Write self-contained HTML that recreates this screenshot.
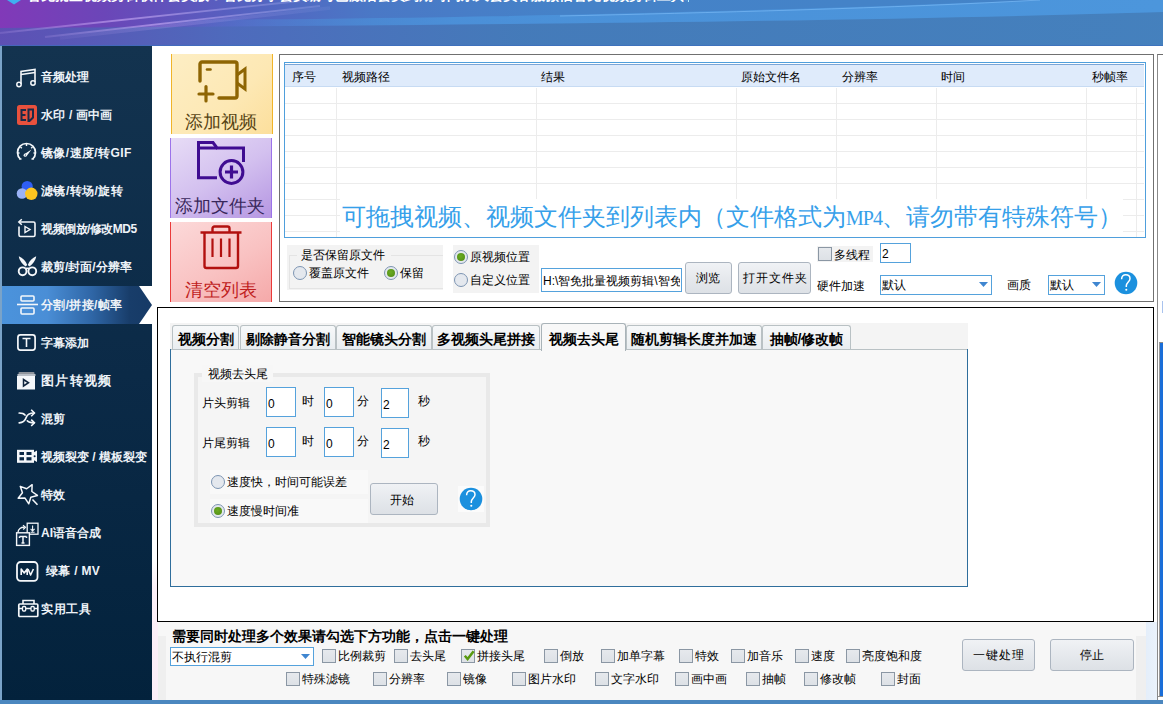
<!DOCTYPE html><html><head><meta charset="utf-8"><style>
*{margin:0;padding:0;box-sizing:border-box}
html,body{width:1163px;height:704px;overflow:hidden;background:#fff;font-family:"Liberation Sans",sans-serif;font-size:12px;color:#000}
div,span,svg{position:absolute}
.t{white-space:nowrap;line-height:12px;font-size:12px}
.si{left:41px;color:#eef3f8;font-size:12px;line-height:12px;white-space:nowrap;font-weight:bold}
.cb{width:14px;height:14px;border:1px solid #8b97a4;background:linear-gradient(180deg,#e6e9ed,#dde1e6)}
.rb{width:14px;height:14px;border-radius:50%;border:1.3px solid #7d95b3;background:#e4e8ee}
.btn{border:1px solid #acb5c0;border-radius:3px;background:linear-gradient(180deg,#f0f2f5 0%,#e6e9ed 50%,#dde1e6 100%)}
.tb{background:#fff;border:1px solid #55a2dc}
.tab{top:325px;height:24px;border:1px solid #b9c1c4;border-bottom:none;border-radius:3px 3px 0 0;background:linear-gradient(180deg,#f7f9fa,#e9edf0);font-weight:bold;font-size:14px;line-height:14px;padding-top:6px;white-space:nowrap;text-align:center}
</style></head><body>
<svg style="left:0;top:0" width="1163" height="46" viewBox="0 0 1163 46"><defs><linearGradient id="hb" x1="0" y1="0" x2="1163" y2="0" gradientUnits="userSpaceOnUse"><stop offset="0" stop-color="#8139b8"/><stop offset="0.09" stop-color="#6b46b8"/><stop offset="0.2" stop-color="#5660c0"/><stop offset="0.32" stop-color="#4a78c6"/><stop offset="0.48" stop-color="#4582c8"/><stop offset="1" stop-color="#4384c8"/></linearGradient><linearGradient id="hl" x1="150" y1="0" x2="1163" y2="0" gradientUnits="userSpaceOnUse"><stop offset="0" stop-color="#4c94dc" stop-opacity="0"/><stop offset="0.3" stop-color="#4c94dc" stop-opacity="0.8"/><stop offset="1" stop-color="#4c96dc" stop-opacity="1"/></linearGradient><linearGradient id="hd" x1="0" y1="0" x2="1163" y2="0" gradientUnits="userSpaceOnUse"><stop offset="0" stop-color="#5a52b4"/><stop offset="0.2" stop-color="#4d6cbc"/><stop offset="0.45" stop-color="#447ab8"/><stop offset="1" stop-color="#4580bc"/></linearGradient><linearGradient id="sg" x1="0" y1="0" x2="1" y2="0"><stop offset="0" stop-color="#d8b8ff" stop-opacity="0.15"/><stop offset="0.4" stop-color="#d8b8ff" stop-opacity="0.55"/><stop offset="1" stop-color="#c8c8ff" stop-opacity="0.2"/></linearGradient></defs><rect x="0" y="0" width="1163" height="46" fill="url(#hb)"/><path d="M0 28 C 300 26, 700 24, 1163 12 V46 H0 Z" fill="url(#hd)" opacity="0.9"/><path d="M150 20 C 400 19, 700 14, 1040 0 H1163 V12 C 900 20, 600 24, 150 27 Z" fill="url(#hl)"/><path d="M560 16 C 700 13, 900 8, 1040 0" stroke="rgba(140,200,255,0.5)" stroke-width="1" fill="none"/><path d="M0 33 L 300 1" stroke="url(#sg)" stroke-width="1.8" fill="none"/><path d="M45 37 L 320 6" stroke="url(#sg)" stroke-width="1.8" fill="none"/><path d="M60 38 L 330 8" stroke="url(#sg)" stroke-width="3.5" fill="none" opacity="0.35"/><rect x="0" y="0" width="250" height="46" fill="rgba(120,40,180,0.0)"/><rect x="0" y="45" width="1163" height="1" fill="rgba(60,110,190,0.7)"/></svg>
<div class="t" style="left:27px;top:-12px;width:662px;overflow:hidden;color:#fff;font-weight:bold;font-size:14px;line-height:14px">智免批量视频剪辑软件会员版：智免分享会员编号已激活会员到期时间永久会员客服微信智免视频剪辑工具箱</div>
<svg style="left:7px;top:0" width="14" height="5"><path d="M0 0 L14 0 L7 4.5 Z" fill="#3fb0f0"/></svg>
<div style="left:0;top:46px;width:152px;height:658px;background:linear-gradient(180deg,#13334f 0%,#0b2a47 50%,#03223c 100%)"></div>
<div style="left:0;top:46px;width:2px;height:658px;background:#7aa3c8"></div>
<div style="left:139px;top:286px;width:13px;height:38px;background:#fff"></div>
<div style="left:2px;top:286px;width:150px;height:38px;clip-path:polygon(0 0,137px 0,150px 19px,137px 38px,0 38px);background:linear-gradient(90deg,#4b93dc 0%,#4a8ed6 30%,#2f66a6 60%,#183d6a 85%,#163a66 100%)"></div>
<div class="si" style="left:41px;top:71px;">音频处理</div>
<div class="si" style="left:41px;top:109px;letter-spacing:0.2px;">水印 / 画中画</div>
<div class="si" style="left:41px;top:147px;letter-spacing:0.4px;">镜像/速度/转GIF</div>
<div class="si" style="left:41px;top:185px;letter-spacing:0.45px;">滤镜/转场/旋转</div>
<div class="si" style="left:41px;top:223px;letter-spacing:-0.5px;">视频倒放/修改MD5</div>
<div class="si" style="left:41px;top:261px;">裁剪/封面/分辨率</div>
<div class="si" style="left:41px;top:299px;letter-spacing:0.35px;">分割/拼接/帧率</div>
<div class="si" style="left:41px;top:337px;">字幕添加</div>
<div class="si" style="left:41px;top:374px;font-size:13px;line-height:13px;letter-spacing:1.3px;">图片转视频</div>
<div class="si" style="left:41px;top:413px;">混剪</div>
<div class="si" style="left:41px;top:451px;">视频裂变 / 模板裂变</div>
<div class="si" style="left:41px;top:489px;">特效</div>
<div class="si" style="left:41px;top:527px;">AI语音合成</div>
<div class="si" style="left:46px;top:565px;letter-spacing:0.3px;">绿幕 / MV</div>
<div class="si" style="left:41px;top:603px;letter-spacing:0.5px;">实用工具</div>
<svg style="left:16px;top:68px" width="21" height="20" viewBox="0 0 21 20"><path d="M5 16 V3.5 L19 1.5 V14" stroke="#f4f7fa" stroke-width="1.6" fill="none"/><path d="M5 6.5 L19 4.5" stroke="#f4f7fa" stroke-width="1.6"/><circle cx="3" cy="16.5" r="2.2" stroke="#f4f7fa" stroke-width="1.5" fill="none"/><circle cx="17" cy="15" r="2.2" stroke="#f4f7fa" stroke-width="1.5" fill="none"/></svg>
<svg style="left:17px;top:105px" width="20" height="20" viewBox="0 0 20 20"><rect x="0" y="0" width="20" height="20" rx="2.5" fill="#e8513d"/><path d="M9 5 H4.5 V15 H9 M4.5 10 H8.5" stroke="#1a2b48" stroke-width="2" fill="none"/><path d="M11.5 4.5 H16 V12.5 L12.5 16 H11.5 Z" stroke="#1a2b48" stroke-width="2" fill="none" stroke-linejoin="miter"/></svg>
<svg style="left:16px;top:142px" width="21" height="20" viewBox="0 0 21 20"><path d="M4.3 17 A9 9 0 1 1 16.7 17" stroke="#f4f7fa" stroke-width="1.7" fill="none"/><path d="M3.2 17 H5.5 M15.5 17 H17.8 M10.5 2 V4 M4.5 5 L5.8 6.3 M16.5 5 L15.2 6.3 M1.8 11 H3.5 M19.2 11 H17.5" stroke="#f4f7fa" stroke-width="1.4"/><path d="M8.2 12.2 L15.5 7.5 L10.5 14.2 Z" fill="#f4f7fa"/><circle cx="9.2" cy="13.2" r="1.6" fill="#f4f7fa"/><circle cx="9.4" cy="13" r="0.6" fill="#13334f"/></svg>
<svg style="left:16px;top:180px" width="22" height="22" viewBox="0 0 22 22"><circle cx="11.2" cy="6.5" r="5.6" fill="#2f5ef5"/><circle cx="6" cy="13.5" r="5.3" fill="#9ab2f6"/><circle cx="15.3" cy="13.8" r="6.2" fill="#fcc520"/></svg>
<svg style="left:17px;top:218px" width="20" height="20" viewBox="0 0 20 20"><path d="M2 4 H16.5 A1.5 1.5 0 0 1 18 5.5 V17 A1.5 1.5 0 0 1 16.5 18.5 H3.5 A1.5 1.5 0 0 1 2 17 V8.5" stroke="#f4f7fa" stroke-width="1.6" fill="none"/><path d="M4.8 1.2 L1.8 4 L4.8 6.8" stroke="#f4f7fa" stroke-width="1.5" fill="none"/><path d="M8 8.5 L13 11.5 L8 14.5 Z" stroke="#f4f7fa" stroke-width="1.4" fill="none"/></svg>
<svg style="left:12px;top:252px" width="30" height="30" viewBox="12 252 30 30"><path d="M18.8 256.3 C 22.5 257.8, 26 261.5, 27.2 265 L 25.6 266.6 C 22.3 264.2, 19.2 260.2, 18.8 256.3 Z" fill="#f4f7fa"/><path d="M36.2 256.3 C 32.5 257.8, 29 261.5, 27.8 265 L 29.4 266.6 C 32.7 264.2, 35.8 260.2, 36.2 256.3 Z" fill="#f4f7fa"/><circle cx="22.6" cy="271.3" r="3.9" stroke="#f4f7fa" stroke-width="1.9" fill="none"/><circle cx="32.3" cy="271.3" r="3.9" stroke="#f4f7fa" stroke-width="1.9" fill="none"/><path d="M25.8 268.3 H29.2" stroke="#f4f7fa" stroke-width="1.5"/></svg>
<svg style="left:17px;top:295px" width="21" height="20" viewBox="0 0 21 20"><rect x="4" y="1" width="13" height="5" rx="1" stroke="#f4f7fa" stroke-width="1.6" fill="none"/><rect x="4" y="13" width="13" height="6" rx="1" stroke="#f4f7fa" stroke-width="1.6" fill="none"/><path d="M0 9.5 H21" stroke="#f4f7fa" stroke-width="1.6"/></svg>
<svg style="left:17px;top:334px" width="19" height="17" viewBox="0 0 19 17"><rect x="0.9" y="0.9" width="17.2" height="15.2" rx="2.5" stroke="#f4f7fa" stroke-width="1.7" fill="none"/><path d="M5.5 4.5 H13.5 M9.5 4.5 V13" stroke="#f4f7fa" stroke-width="1.6"/></svg>
<svg style="left:17px;top:372px" width="19" height="18" viewBox="0 0 19 18"><rect x="1.5" y="0" width="16" height="2.5" rx="1" fill="#8e949c"/><rect x="0.5" y="2" width="18" height="2" fill="#b8bec6"/><rect x="0" y="4" width="18" height="13.5" fill="#f4f7fa"/><path d="M6.5 7.5 L11.5 10.75 L6.5 14 Z" stroke="#10243c" stroke-width="1.5" fill="none"/></svg>
<svg style="left:12px;top:404px" width="30" height="30" viewBox="12 404 30 30"><path d="M19.2 413 C 22 413, 23.8 413.4, 25 415 M19.2 422.8 C 23.8 422.8, 25.3 420.3, 26.3 417.3 C 27.3 414.3, 29.5 413, 34 413 M27.3 420.8 C 28.5 422.3, 30 422.8, 34 422.8" stroke="#f4f7fa" stroke-width="1.7" fill="none" stroke-linecap="round"/><path d="M31.2 409.8 L34.4 413 L31.2 416.2 M31.2 419.6 L34.4 422.8 L31.2 426" stroke="#f4f7fa" stroke-width="1.6" fill="none"/></svg>
<svg style="left:17px;top:448px" width="21" height="17" viewBox="0 0 21 17"><rect x="0" y="1.8" width="17" height="13" fill="#f4f7fa"/><rect x="2.5" y="4" width="4.5" height="3" fill="#0a2846"/><rect x="9.5" y="4" width="5" height="3" fill="#0a2846"/><rect x="2.5" y="9.2" width="4.5" height="3.2" fill="#0a2846"/><rect x="9.5" y="9.2" width="5" height="3.2" fill="#0a2846"/><path d="M16.5 4.5 L20 2.5 V14 L16.5 12 Z" fill="#f4f7fa"/><circle cx="17.6" cy="8.2" r="1" fill="#0a2846"/></svg>
<svg style="left:12px;top:480px" width="30" height="30" viewBox="12 480 30 30"><path d="M37.41 495.47 L30.83 497.30 L28.78 503.80 L25.01 498.11 L18.19 498.17 L22.44 492.83 L20.27 486.36 L26.66 488.75 L32.15 484.69 L31.85 491.51 Z" stroke="#f4f7fa" stroke-width="1.5" fill="none" stroke-linejoin="round"/><path d="M32.5 499.5 L37.5 504.8" stroke="#f4f7fa" stroke-width="1.6"/></svg>
<svg style="left:12px;top:518px" width="30" height="30" viewBox="12 518 30 30"><rect x="27.2" y="523.2" width="10.8" height="11" stroke="#f4f7fa" stroke-width="1.3" fill="none"/><rect x="16.6" y="532.8" width="12.8" height="12.6" stroke="#f4f7fa" stroke-width="1.4" fill="#0a2846"/><path d="M19.5 536.5 H26.5 M19.5 536.5 V538 M26.5 536.5 V538 M23 536.5 V543 M21.5 543 H24.5" stroke="#f4f7fa" stroke-width="1.5" fill="none"/><path d="M32.6 525.5 V530.5 M30.6 528.8 L32.6 531 L34.6 528.8 M30.6 532.3 H34.6" stroke="#f4f7fa" stroke-width="1.1" fill="none"/><path d="M18 532.5 C18 529, 21 527, 24.5 527.3" stroke="#f4f7fa" stroke-width="1.3" fill="none"/><path d="M23 525.3 L25.5 527.3 L23.2 529.5" stroke="#f4f7fa" stroke-width="1.2" fill="none"/></svg>
<svg style="left:16px;top:561px" width="23" height="21" viewBox="0 0 23 21"><rect x="1" y="1" width="20.5" height="18.8" rx="3.5" stroke="#f4f7fa" stroke-width="1.8" fill="none"/><path d="M5.2 14 V8 L8.2 12 L11.2 8 V14 M12 8 L14.6 14 L17.4 8" stroke="#f4f7fa" stroke-width="1.6" fill="none" stroke-linejoin="round"/></svg>
<svg style="left:17px;top:599px" width="22" height="19" viewBox="0 0 22 19"><path d="M6 5 V1.5 H17 V5" stroke="#f4f7fa" stroke-width="1.6" fill="none"/><rect x="1.8" y="5" width="19" height="12.5" rx="1" stroke="#f4f7fa" stroke-width="1.7" fill="none"/><path d="M1.8 9.5 H6 M9 9.5 H14 M17 9.5 H20.8" stroke="#f4f7fa" stroke-width="1.5"/><rect x="5.5" y="7.5" width="3.2" height="4.5" rx="1" stroke="#f4f7fa" stroke-width="1.3" fill="none"/><rect x="14" y="7.5" width="3.2" height="4.5" rx="1" stroke="#f4f7fa" stroke-width="1.3" fill="none"/></svg>
<div style="left:152px;top:560px;width:6px;height:140px;background:linear-gradient(180deg,#fff 0%,#fcf0f8 20%,#fbeef8 100%)"></div>
<div style="left:171px;top:54px;width:102px;height:80px;border-left:1px solid #f0b429;border-right:1px solid #f0b429;background:linear-gradient(135deg,#fdeec4 0%,#fde8b4 60%,#fcdf9c 100%)"></div>
<svg style="left:196px;top:59px" width="52" height="44" viewBox="0 0 52 44"><path d="M4 22 V5 A2 2 0 0 1 6 3 H39 A2 2 0 0 1 41 5 V37 A2 2 0 0 1 39 39 H23" stroke="#8e6503" stroke-width="3.4" fill="none" stroke-linecap="round"/><path d="M11 10.5 H14.5" stroke="#8e6503" stroke-width="2.6" stroke-linecap="round"/><path d="M41 16 L49 10 V30 L41 24" stroke="#8e6503" stroke-width="3" fill="none" stroke-linejoin="miter"/><path d="M3 35 H17 M10 27.5 V42" stroke="#8e6503" stroke-width="3.2" stroke-linecap="round"/></svg>
<div class="t" style="left:185px;top:112px;font-size:18px;line-height:20px;color:#574414">添加视频</div>
<div style="left:170px;top:138px;width:102px;height:80px;border-left:1px solid #9c73ea;border-right:1px solid #9c73ea;background:linear-gradient(150deg,#e7dcf6 0%,#d3c0ef 50%,#b596e2 100%)"></div>
<svg style="left:190px;top:136px" width="60" height="52" viewBox="190 136 60 52"><path d="M217 177.8 H198.5 V142.5 H213 L217 148 H243.5 V162" stroke="#3f0c91" stroke-width="3" fill="none"/><path d="M198.5 148 H217" stroke="#3f0c91" stroke-width="3"/><circle cx="231.5" cy="172" r="11.4" stroke="#3f0c91" stroke-width="3" fill="none"/><path d="M225 172 H238 M231.5 165.5 V178.5" stroke="#3f0c91" stroke-width="3.2"/></svg>
<div class="t" style="left:175px;top:196px;font-size:18px;line-height:20px;color:#38275a">添加文件夹</div>
<div style="left:170px;top:222px;width:102px;height:80px;border-left:1px solid #ea3a3a;border-right:1px solid #ea3a3a;background:linear-gradient(150deg,#fcd9d9 0%,#f9c2c2 55%,#f5a9a9 100%)"></div>
<svg style="left:199px;top:224px" width="44" height="46" viewBox="0 0 44 46"><path d="M1.5 8.5 H42.5" stroke="#b2100f" stroke-width="2.4"/><path d="M13.5 8.5 V4.5 A2 2 0 0 1 15.5 2.5 H28.5 A2 2 0 0 1 30.5 4.5 V8.5" stroke="#b2100f" stroke-width="2.4" fill="none"/><path d="M5.5 8.5 V42 A2 2 0 0 0 7.5 44 H37 A2 2 0 0 0 39 42 V8.5" stroke="#b2100f" stroke-width="2.4" fill="none"/><path d="M13.5 14.5 V33 M22 14.5 V33 M30.5 14.5 V33" stroke="#b2100f" stroke-width="2.2"/></svg>
<div class="t" style="left:185px;top:280px;font-size:18px;line-height:20px;color:#c01e1e">清空列表</div>
<div style="left:279px;top:54px;width:875px;height:248px;border:1px solid #707070"></div>
<div style="left:284px;top:62px;width:862px;height:176px;border:1px solid #4f9fdc;background:#fff"></div>
<div style="left:285px;top:64px;width:859px;height:1px;background:#7aa6d8"></div>
<div style="left:285px;top:65px;width:859px;height:22px;background:#dfebfb;border-bottom:1px solid #c7dbf3"></div>
<div style="left:285px;top:103px;width:859px;height:1px;background:#ececec"></div>
<div style="left:285px;top:119px;width:859px;height:1px;background:#ececec"></div>
<div style="left:285px;top:135px;width:859px;height:1px;background:#ececec"></div>
<div style="left:285px;top:151px;width:859px;height:1px;background:#ececec"></div>
<div style="left:285px;top:167px;width:859px;height:1px;background:#ececec"></div>
<div style="left:285px;top:183px;width:859px;height:1px;background:#ececec"></div>
<div style="left:285px;top:199px;width:859px;height:1px;background:#ececec"></div>
<div style="left:285px;top:215px;width:859px;height:1px;background:#ececec"></div>
<div style="left:285px;top:231px;width:859px;height:1px;background:#ececec"></div>
<div style="left:336px;top:88px;width:1px;height:149px;background:#ececec"></div>
<div style="left:536px;top:88px;width:1px;height:149px;background:#ececec"></div>
<div style="left:736px;top:88px;width:1px;height:149px;background:#ececec"></div>
<div style="left:836px;top:88px;width:1px;height:149px;background:#ececec"></div>
<div style="left:936px;top:88px;width:1px;height:149px;background:#ececec"></div>
<div style="left:1086px;top:88px;width:1px;height:149px;background:#ececec"></div>
<div style="left:1136px;top:88px;width:1px;height:149px;background:#ececec"></div>
<div class="t" style="left:292px;top:71px">序号</div>
<div class="t" style="left:342px;top:71px">视频路径</div>
<div class="t" style="left:541px;top:71px">结果</div>
<div class="t" style="left:741px;top:71px">原始文件名</div>
<div class="t" style="left:842px;top:71px">分辨率</div>
<div class="t" style="left:941px;top:71px">时间</div>
<div class="t" style="left:1092px;top:71px">秒帧率</div>
<div style="left:340px;top:199px;width:783px;height:38px;background:#fff"></div>
<div class="t" style="left:342px;top:205px;font-size:24px;line-height:24px;color:#36a0ea;font-weight:300">可拖拽视频、视频文件夹到列表内（文件格式为<span style="position:static;font-family:'Liberation Serif',serif;font-size:20px;letter-spacing:-1px;font-weight:normal">MP4</span>、请勿带有特殊符号）</div>
<div style="left:287px;top:245px;width:156px;height:45px;background:#f3f3f3"></div>
<div style="left:289px;top:255px;width:154px;height:34px;border:1px solid #e4e4e4;border-right:none"></div>
<div style="left:297px;top:247px;width:94px;height:15px;background:#f3f3f3"></div>
<div class="t" style="left:301px;top:249px">是否保留原文件</div>
<div class="rb" style="left:293px;top:266px"></div>
<div class="t" style="left:309px;top:267px">覆盖原文件</div>
<div class="rb" style="left:384px;top:266px"></div><div style="left:387px;top:269px;width:8px;height:8px;border-radius:50%;background:radial-gradient(circle at 45% 40%,#6aab22,#4f8a14)"></div>
<div class="t" style="left:400px;top:267px">保留</div>
<div style="left:453px;top:245px;width:86px;height:48px;background:#f3f3f3"></div>
<div class="rb" style="left:454px;top:250px"></div><div style="left:457px;top:253px;width:8px;height:8px;border-radius:50%;background:radial-gradient(circle at 45% 40%,#6aab22,#4f8a14)"></div>
<div class="t" style="left:470px;top:251px">原视频位置</div>
<div class="rb" style="left:454px;top:273px"></div>
<div class="t" style="left:470px;top:274px">自定义位置</div>
<div class="tb" style="left:541px;top:268px;width:141px;height:24px;overflow:hidden"></div>
<div class="t" style="left:543px;top:275px;width:137px;overflow:hidden">H:\智免批量视频剪辑\智免</div>
<div class="btn" style="left:685px;top:262px;width:47px;height:32px"></div>
<div class="t" style="left:696px;top:272px">浏览</div>
<div class="btn" style="left:738px;top:262px;width:73px;height:32px"></div>
<div class="t" style="left:743px;top:272px;letter-spacing:1px">打开文件夹</div>
<div style="left:817px;top:246px;width:56px;height:16px;background:#f3f3f3"></div>
<div class="cb" style="left:818px;top:247px"></div>
<div class="t" style="left:834px;top:249px">多线程</div>
<div class="tb" style="left:880px;top:243px;width:31px;height:20px"></div>
<div class="t" style="left:882px;top:248px">2</div>
<div class="t" style="left:817px;top:280px">硬件加速</div>
<div class="tb" style="left:880px;top:275px;width:112px;height:20px"></div>
<div class="t" style="left:882px;top:279px">默认</div>
<svg style="left:979px;top:282px" width="9" height="5"><path d="M0 0 H9 L4.5 5 Z" fill="#3f86d0"/></svg>
<div class="t" style="left:1007px;top:279px">画质</div>
<div class="tb" style="left:1048px;top:275px;width:57px;height:20px"></div>
<div class="t" style="left:1050px;top:279px">默认</div>
<svg style="left:1092px;top:282px" width="9" height="5"><path d="M0 0 H9 L4.5 5 Z" fill="#3f86d0"/></svg>
<div style="left:157px;top:307px;width:997px;height:315px;border:1px solid #000;background:#fff"></div>
<div style="left:170px;top:323px;width:798px;height:27px;background:#f4f4f4"></div>
<div style="left:170px;top:349px;width:798px;height:238px;background:#f8f8f8;border:1px solid #2f6e9c;border-top:none"></div>
<div style="left:171px;top:349px;width:796px;height:1px;background:#b9c1c4"></div>
<div class="tab" style="left:172px;width:67px">视频分割</div>
<div class="tab" style="left:240px;width:96px">剔除静音分割</div>
<div class="tab" style="left:336px;width:96px">智能镜头分割</div>
<div class="tab" style="left:432px;width:108px">多视频头尾拼接</div>
<div class="tab" style="left:626px;width:136px">随机剪辑长度并加速</div>
<div class="tab" style="left:762px;width:89px">抽帧/修改帧</div>
<div class="tab" style="left:541px;top:323px;width:85px;height:28px;padding-top:8px;background:#f8f8f8;border-color:#a9b3b8">视频去头尾</div>
<div style="left:194px;top:373px;width:296px;height:154px;border:4px solid #e9e9e9;background:#f5f5f5"></div>
<div style="left:202px;top:365px;width:71px;height:17px;background:#f7f7f7"></div>
<div class="t" style="left:208px;top:368px">视频去头尾</div>
<div class="t" style="left:202px;top:397px">片头剪辑</div>
<div class="tb" style="left:266px;top:387px;width:30px;height:30px"></div>
<div class="t" style="left:268px;top:398px">0</div>
<div class="t" style="left:302px;top:395px">时</div>
<div class="tb" style="left:324px;top:387px;width:30px;height:30px"></div>
<div class="t" style="left:326px;top:398px">0</div>
<div class="t" style="left:357px;top:395px">分</div>
<div class="tb" style="left:381px;top:388px;width:28px;height:30px"></div>
<div class="t" style="left:383px;top:399px">2</div>
<div class="t" style="left:418px;top:395px">秒</div>
<div class="t" style="left:202px;top:437px">片尾剪辑</div>
<div class="tb" style="left:266px;top:427px;width:30px;height:30px"></div>
<div class="t" style="left:268px;top:438px">0</div>
<div class="t" style="left:302px;top:435px">时</div>
<div class="tb" style="left:324px;top:427px;width:30px;height:30px"></div>
<div class="t" style="left:326px;top:438px">0</div>
<div class="t" style="left:357px;top:435px">分</div>
<div class="tb" style="left:381px;top:428px;width:28px;height:30px"></div>
<div class="t" style="left:383px;top:439px">2</div>
<div class="t" style="left:418px;top:435px">秒</div>
<div style="left:210px;top:470px;width:158px;height:24px;background:#f9f9f9"></div>
<div style="left:210px;top:499px;width:158px;height:24px;background:#f9f9f9"></div>
<div class="rb" style="left:211px;top:475px"></div>
<div class="t" style="left:227px;top:476px">速度快，时间可能误差</div>
<div class="rb" style="left:211px;top:504px"></div><div style="left:214px;top:507px;width:8px;height:8px;border-radius:50%;background:radial-gradient(circle at 45% 40%,#6aab22,#4f8a14)"></div>
<div class="t" style="left:227px;top:505px">速度慢时间准</div>
<div class="btn" style="left:370px;top:483px;width:68px;height:32px"></div>
<div class="t" style="left:390px;top:494px">开始</div>
<div style="left:458px;top:486px;width:26px;height:26px;background:#fbfbfb"></div>
<svg style="left:459px;top:487px" width="24" height="24" viewBox="0 0 24 24"><circle cx="12" cy="12" r="11.3" fill="#1b90de"/><path d="M7.6 8.2 C7.6 5, 9.6 3.8, 11.7 3.8 C14.2 3.8, 16 5.3, 16 7.7 C16 10.6, 12.3 11.4, 12.3 14.8 V16" stroke="#fff" stroke-width="1.5" fill="none"/><circle cx="12.3" cy="18.8" r="1.05" fill="#fff"/></svg>
<div style="left:158px;top:622px;width:988px;height:78px;background:#f7f7f7"></div>
<div class="t" style="left:172px;top:629px;font-weight:bold;font-size:14px;line-height:14px">需要同时处理多个效果请勾选下方功能，点击一键处理</div>
<div class="tb" style="left:170px;top:647px;width:144px;height:19px"></div>
<div class="t" style="left:172px;top:651px">不执行混剪</div>
<svg style="left:301px;top:654px" width="9" height="5"><path d="M0 0 H9 L4.5 5 Z" fill="#3f86d0"/></svg>
<div class="cb" style="left:322px;top:649px"></div><div class="t" style="left:338px;top:650px">比例裁剪</div>
<div class="cb" style="left:394px;top:649px"></div><div class="t" style="left:410px;top:650px">去头尾</div>
<div class="cb" style="left:461px;top:649px"></div><div class="t" style="left:477px;top:650px">拼接头尾</div>
<div class="cb" style="left:544px;top:649px"></div><div class="t" style="left:560px;top:650px">倒放</div>
<div class="cb" style="left:601px;top:649px"></div><div class="t" style="left:617px;top:650px">加单字幕</div>
<div class="cb" style="left:679px;top:649px"></div><div class="t" style="left:695px;top:650px">特效</div>
<div class="cb" style="left:731px;top:649px"></div><div class="t" style="left:747px;top:650px">加音乐</div>
<div class="cb" style="left:795px;top:649px"></div><div class="t" style="left:811px;top:650px">速度</div>
<div class="cb" style="left:846px;top:649px"></div><div class="t" style="left:862px;top:650px">亮度饱和度</div>
<div class="cb" style="left:286px;top:672px"></div><div class="t" style="left:302px;top:673px">特殊滤镜</div>
<div class="cb" style="left:373px;top:672px"></div><div class="t" style="left:389px;top:673px">分辨率</div>
<div class="cb" style="left:447px;top:672px"></div><div class="t" style="left:463px;top:673px">镜像</div>
<div class="cb" style="left:512px;top:672px"></div><div class="t" style="left:528px;top:673px">图片水印</div>
<div class="cb" style="left:595px;top:672px"></div><div class="t" style="left:611px;top:673px">文字水印</div>
<div class="cb" style="left:675px;top:672px"></div><div class="t" style="left:691px;top:673px">画中画</div>
<div class="cb" style="left:746px;top:672px"></div><div class="t" style="left:762px;top:673px">抽帧</div>
<div class="cb" style="left:804px;top:672px"></div><div class="t" style="left:820px;top:673px">修改帧</div>
<div class="cb" style="left:881px;top:672px"></div><div class="t" style="left:897px;top:673px">封面</div>
<svg style="left:462px;top:648px" width="14" height="14"><path d="M2.8 7.8 L5.6 11 L11.6 3.2" stroke="#58990f" stroke-width="2.5" fill="none"/></svg>
<div class="btn" style="left:962px;top:639px;width:73px;height:32px"></div>
<div class="t" style="left:973px;top:649px;letter-spacing:1px">一键处理</div>
<div class="btn" style="left:1050px;top:639px;width:84px;height:32px"></div>
<div class="t" style="left:1080px;top:649px">停止</div>
<svg style="left:1113.5px;top:270.5px" width="24" height="24" viewBox="0 0 24 24"><circle cx="12" cy="12" r="11.3" fill="#1b90de"/><path d="M7.6 8.2 C7.6 5, 9.6 3.8, 11.7 3.8 C14.2 3.8, 16 5.3, 16 7.7 C16 10.6, 12.3 11.4, 12.3 14.8 V16" stroke="#fff" stroke-width="1.5" fill="none"/><circle cx="12.3" cy="18.8" r="1.05" fill="#fff"/></svg>
<div style="left:1146px;top:622px;width:17px;height:78px;background:linear-gradient(90deg,#e4eefa,#eef5fc)"></div>
<div style="left:1157px;top:54px;width:6px;height:646px;border-left:1px solid #8a8a8a;border-top:1px solid #6d6d6d;background:#fff"></div>
<div style="left:1159px;top:342px;width:4px;height:355px;border-left:1px solid #9a9a9a;border-top:1px solid #8a8a8a;background:#1a6ed8"></div>
<div style="left:1158px;top:696px;width:5px;height:4px;background:#fff;border-top:1px solid #8a8a8a"></div>
<div style="left:158px;top:636px;width:8px;height:64px;background:#efefef"></div>
<div style="left:1136px;top:636px;width:10px;height:64px;background:#efefef"></div>
<div style="left:1162px;top:301px;width:1px;height:12px;background:#a9c3ee"></div>
<div style="left:0;top:700px;width:1163px;height:4px;background:#4b87bf"></div>
</body></html>
